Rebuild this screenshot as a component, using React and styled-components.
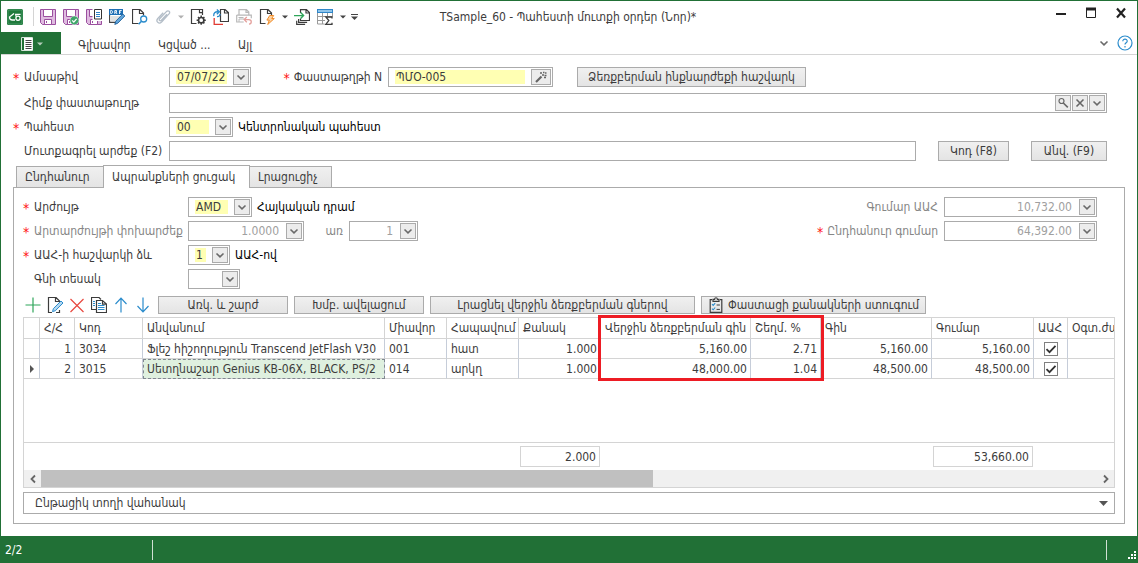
import styled, { createGlobalStyle, css } from 'styled-components'

const GlobalStyle = createGlobalStyle`
  * {
    box-sizing: border-box;
  }
  body {
    margin: 0;
    background: #ffffff;
  }
  body, button, input, table {
    font-family: "DejaVu Sans Condensed", "DejaVu Sans", sans-serif;
    font-size: 12px;
    color: #3c3c3c;
  }
  svg {
    display: block;
    flex: none;
  }
`

const Window = styled.div`
  display: flex;
  flex-direction: column;
  min-height: 100vh;
  border: 1px solid #217036;
  border-bottom: 0;
`

const TitleBar = styled.header`
  display: grid;
  grid-template-columns: 1fr auto 1fr;
  align-items: center;
  height: 31px;
  padding: 0 8px 0 6px;
`

const QuickTools = styled.div`
  display: flex;
  align-items: center;
  gap: 7px;
`

const Divider = styled.span`
  width: 1px;
  height: 19px;
  margin: 0 -1px 0 3px;
  background: #d4d4d4;
`

const IconButton = styled.button`
  display: flex;
  align-items: center;
  justify-content: center;
  flex: none;
  width: 16px;
  height: 18px;
  padding: 0;
  border: 0;
  background: transparent;
`

const CaretButton = styled(IconButton)`
  width: 7px;
  margin: 0 -1px;
`

const Title = styled.h1`
  margin: 0;
  font-size: 12px;
  font-weight: 400;
  white-space: nowrap;
`

const WindowButtons = styled.div`
  display: flex;
  justify-content: flex-end;
  gap: 14px;
  padding-bottom: 8px;
`

const Ribbon = styled.nav`
  display: flex;
  align-items: center;
  height: 23px;
  border-bottom: 1px solid #d4d4d4;
`

const FileButton = styled.button`
  display: flex;
  align-items: center;
  justify-content: center;
  gap: 2px;
  width: 60px;
  height: 22px;
  padding: 2px 0 0;
  border: 0;
  background: #217036;
`

const RibbonTab = styled.button`
  height: 22px;
  margin-left: 17px;
  padding: 4px 0 0;
  border: 0;
  background: transparent;
  min-width: ${props => props.$width}px;
  text-align: left;
  white-space: nowrap;
`

const RibbonEnd = styled.div`
  display: flex;
  align-items: center;
  gap: 5px;
  margin-left: auto;
  padding-right: 4px;
`

const Form = styled.main`
  display: flex;
  flex-direction: column;
  flex: 1;
  padding: 12px 12px;
`

const FormRows = styled.div`
  display: flex;
  flex-direction: column;
  gap: 4px;
  padding-right: 18px;
`

const Row = styled.div`
  display: flex;
  align-items: center;
  height: 20px;
  margin-bottom: ${props => (props.$spaced ? 2 : 0)}px;
`

const Label = styled.label`
  flex: none;
  width: ${props => props.$width}px;
  padding-left: 11px;
  white-space: nowrap;
  color: ${props => (props.$muted ? '#868686' : '#3c3c3c')};
  ${props => props.$right && css`
    padding: 0 6px 0 0;
    text-align: right;
  `}
`

const Star = styled.span`
  display: inline-block;
  margin-left: ${props => (props.$inline ? 0 : -11)}px;
  margin-right: ${props => (props.$inline ? 4 : 0)}px;
  width: ${props => (props.$inline ? 'auto' : '11px')};
  color: #ff1010;
  font-size: 14px;
  line-height: 12px;
  vertical-align: bottom;
`

const Box = styled.div`
  display: flex;
  align-items: center;
  flex: ${props => (props.$width ? 'none' : '1')};
  min-width: 0;
  width: ${props => (props.$width ? `${props.$width}px` : 'auto')};
  height: 20px;
  padding: 0 1px 0 6px;
  border: 1px solid #ababab;
  background: #ffffff;
`

const TextInput = styled.input`
  flex: 1;
  min-width: 0;
  width: 0;
  height: 14px;
  margin-right: 6px;
  padding: 0 1px;
  border: 0;
  outline: 0;
  background: ${props => (props.$required ? '#ffffb3' : 'transparent')};
  text-align: ${props => (props.$number ? 'right' : 'left')};
  &:disabled {
    color: #a0a0a0;
  }
`

const BoxButton = styled.button`
  display: flex;
  align-items: center;
  justify-content: center;
  flex: none;
  width: ${props => (props.$wide ? 20 : 16)}px;
  height: 16px;
  margin-left: ${props => (props.$next ? 1 : 0)}px;
  padding: 0;
  border: 1px solid #ababab;
  background: #ececec;
`

const Button = styled.button`
  display: flex;
  align-items: center;
  justify-content: center;
  flex: none;
  gap: 4px;
  width: ${props => props.$width}px;
  height: ${props => (props.$small ? 18 : 20)}px;
  margin-left: ${props => props.$gap || 0}px;
  padding: 0;
  border: 1px solid #ababab;
  background: linear-gradient(#f0f0f0, #e4e4e4);
  white-space: nowrap;
`

const Note = styled.span`
  padding-left: 5px;
  color: #000000;
  white-space: nowrap;
`

const Tabs = styled.div`
  display: flex;
  align-items: flex-end;
  margin-top: 4px;
  padding-left: 3px;
`

const Tab = styled.button`
  width: ${props => props.$width}px;
  height: 21px;
  padding: 0 8px;
  border: 1px solid #ababab;
  border-bottom: 0;
  background: linear-gradient(#f0f0f0, #e4e4e4);
  text-align: left;
  white-space: nowrap;
  ${props => props.$active && css`
    z-index: 1;
    height: 23px;
    margin: 0 -1px -1px;
    background: #ffffff;
  `}
`

const Panel = styled.section`
  display: flex;
  flex-direction: column;
  flex: 1;
  padding: 9px 9px;
  border: 1px solid #ababab;
`

const Split = styled.div`
  display: flex;
  justify-content: space-between;
  padding-right: 18px;
`

const Column = styled.div`
  display: flex;
  flex-direction: column;
  gap: 4px;
`

const Between = styled(Label)`
  padding: 0 6px 0 0;
  text-align: right;
`

const ListTools = styled.div`
  display: flex;
  align-items: center;
  gap: 6px;
  margin-top: 7px;
  padding-left: 2px;
`

const ToolIcons = styled.div`
  display: flex;
  gap: 6px;
  margin-right: 1px;
`

const GridFrame = styled.div`
  display: flex;
  flex-direction: column;
  flex: 1;
  margin-top: 3px;
  border: 1px solid #d4d4d4;
`

const GridScroll = styled.div`
  position: relative;
  flex: 1;
`

const Table = styled.table`
  table-layout: fixed;
  width: 100%;
  border-collapse: separate;
  border-spacing: 0;
`

const HeadCell = styled.th`
  height: 21px;
  padding: 0 0 0 4px;
  border-right: 1px solid #d4d4d4;
  border-bottom: 1px solid #d4d4d4;
  font-weight: 400;
  text-align: left;
  white-space: nowrap;
  overflow: hidden;
  &:last-child {
    border-right: 0;
  }
`

const Cell = styled.td`
  height: 20px;
  padding: 0 3px 0 4px;
  border-right: 1px solid #c6cdd9;
  border-bottom: 1px solid #d4d4d4;
  text-align: ${props => (props.$number ? 'right' : 'left')};
  white-space: nowrap;
  overflow: hidden;
  &:last-child {
    border-right: 0;
  }
  ${props => props.$selected && css`
    background: #dff0df;
    outline: 1px dashed #808890;
    outline-offset: -1px;
  `}
`

const FillerCell = styled.td`
  height: 64px;
  padding: 0;
  border-bottom: 1px solid #d4d4d4;
`

const TotalCell = styled.td`
  height: 27px;
  padding: 0 1px;
`

const Total = styled.div`
  height: 21px;
  padding-right: 3px;
  border: 1px solid #d4d4d4;
  line-height: 20px;
  text-align: right;
`

const CheckWrap = styled.label`
  display: grid;
  justify-content: center;
  align-items: center;
  & > * {
    grid-area: 1 / 1;
  }
  svg {
    justify-self: center;
    pointer-events: none;
  }
`

const Check = styled.input`
  appearance: none;
  width: 14px;
  height: 14px;
  margin: 0;
  border: 1px solid #808080;
  background: #ffffff;
`

const Highlight = styled.div`
  position: absolute;
  left: 574px;
  top: -3px;
  width: 226px;
  height: 66px;
  border: 3px solid #ed1c24;
  pointer-events: none;
`

const ScrollBar = styled.div`
  display: flex;
  height: 17px;
  background: #f0f0f0;
`

const ScrollArrow = styled(IconButton)`
  width: 17px;
  height: 17px;
`

const ScrollTrack = styled.div`
  flex: 1;
`

const ScrollThumb = styled.div`
  width: 58%;
  height: 17px;
  background: #c0c0c0;
`

const RowPanelButton = styled.button`
  display: flex;
  align-items: center;
  justify-content: space-between;
  height: 22px;
  margin-top: 4px;
  padding: 0 6px 0 11px;
  border: 1px solid #ababab;
  background: #ffffff;
`

const StatusBar = styled.footer`
  display: flex;
  align-items: center;
  height: 27px;
  background: #217036;
  color: #ffffff;
`

const StatusText = styled.span`
  width: 152px;
  height: 20px;
  padding-left: 4px;
  border-right: 1px solid #d0e0d4;
  line-height: 20px;
`

const StatusEnd = styled.span`
  display: flex;
  align-items: flex-end;
  justify-content: flex-end;
  width: 31px;
  height: 20px;
  margin-left: auto;
  border-left: 1px solid #d0e0d4;
`

const Icon = ({ size = 16, children }) => (
  <svg width={size} height={size} viewBox={`0 0 ${size} ${size}`} fill="none" aria-hidden="true">
    {children}
  </svg>
)

const Caret = ({ color = '#444444', bar }) => (
  <svg width="7" height="8" viewBox="0 0 7 8" aria-hidden="true">
    {bar && <path d="M0 1.5h7" stroke={color} />}
    <path d={bar ? 'M0 3.5h7L3.5 7z' : 'M1 2.500h6L4 5.500z'} fill={color} />
  </svg>
)

const Chevron = () => (
  <svg width="10" height="7" viewBox="0 0 10 7" fill="none" aria-hidden="true">
    <path d="M1.5 1.5L5 4.8l3.5-3.3" stroke="#6a6a6a" strokeWidth="1.6" />
  </svg>
)

const AppIcon = () => (
  <Icon>
    <rect width="16" height="16" rx="1.5" fill="#1f7a3c" />
    <rect x="1" y="1" width="14" height="14" rx="1" stroke="#5faa78" strokeWidth=".6" />
    <path d="M7 4.500L2.500 8c0 2 1.2 3 2.800 3H8" stroke="#ffffff" strokeWidth="1.3" />
    <circle cx="11" cy="9.2" r="2.1" stroke="#ffffff" strokeWidth="1.3" />
    <path d="M9.2 7.5l-.6-2.2h5" stroke="#ffffff" strokeWidth="1.2" />
  </Icon>
)

const Disk = () => (
  <>
    <path d="M.5.5h15v15h-13l-2-2z" fill="#dfbbe0" stroke="#9b4f9f" />
    <path d="M3.500.5h9v7h-9zM4.500 15.500v-5h7v5z" fill="#ffffff" stroke="#9b4f9f" />
    <path d="M6.5 12v2" stroke="#9b4f9f" />
  </>
)

const SaveIcon = () => <Icon><Disk /></Icon>

const SaveOkIcon = () => (
  <Icon>
    <Disk />
    <circle cx="11.4" cy="11.4" r="4.400" fill="#3fa66a" stroke="#ffffff" strokeWidth=".5" />
    <path d="M9.2 11.4l1.6 1.7 2.8-3.2" stroke="#ffffff" strokeWidth="1.3" />
  </Icon>
)

const SaveDocIcon = () => (
  <Icon>
    <Disk />
    <path d="M6.500 0H16v12H6.500z" fill="#ffffff" />
    <path d="M8.500.5h7v9.500h-7z" fill="#ffffff" stroke="#333333" />
    <path d="M10 3.500h4M10 5.500h4M10 7.500h4" stroke="#2f86c8" />
  </Icon>
)

const DraftIcon = () => (
  <Icon>
    <path d="M.6 5v8.400h8M12.500 5h1v2" stroke="#444444" strokeWidth="1.1" />
    <path d="M0 0h14v6H0z" fill="#1e6eb4" />
    <path d="M1.700 1.500h1l.9.8v1.400l-.9.8h-1zM5.800 5V1.500h1.700v1.700H5.800M7 3.200L8 5M10.500 5V1.500h2.200M10.500 3.100H12" stroke="#ffffff" strokeWidth=".9" />
    <path d="M2 8h9M2 10h7M2 12h5" stroke="#c4c4c4" />
    <path d="M5.800 15.400l1-3.200 7-7.200 2 2-7 7.200z" fill="#62a6dc" stroke="#1d5f98" strokeWidth=".9" />
  </Icon>
)

const PreviewIcon = () => (
  <Icon>
    <path d="M11.500 6.500V4L8 .5H.5v14h6M7.500.8v3.700h4" stroke="#3c3c3c" strokeWidth="1.2" />
    <circle cx="11.700" cy="10" r="3" fill="#ffffff" stroke="#2b8ccc" strokeWidth="1.3" />
    <path d="M9.500 12.300L6.600 15.300" stroke="#2b8ccc" strokeWidth="1.6" />
  </Icon>
)

const ClipIcon = () => (
  <Icon>
    <path d="M12 5.300l-5.600 6c-1.300 1.300-3-.1-1.800-1.500l6.800-7.200c2-1.800 4.300.3 2.600 2.300L6.600 13c-2.700 2.600-6.300-.5-3.800-3.500l5.400-5.800" stroke="#b4bec8" strokeWidth="1.3" />
  </Icon>
)

const PageSetupIcon = () => (
  <Icon>
    <path d="M12.500 6V.5H1.500v14h5M9.500.7v3h3" stroke="#3c3c3c" strokeWidth="1.2" />
    <circle cx="11.200" cy="11.200" r="2.700" fill="#ffffff" stroke="#3c3c3c" strokeWidth="1.7" />
    <path d="M11.200 6.600v2M11.200 13.800v2M6.600 11.200h2M13.800 11.200h2M8 8l1.300 1.300M13.100 13.100l1.300 1.300M14.400 8l-1.300 1.300M9.300 13.100L8 14.400" stroke="#3c3c3c" strokeWidth="1.5" />
  </Icon>
)

const TransferIcon = () => (
  <Icon>
    <path d="M7.500.5h4.500l3.500 3.200v8.800h-8zM11.500.8v3.200h3.700" stroke="#3c3c3c" strokeWidth="1.2" fill="#ffffff" />
    <path d="M10 15.300H1.200V9" stroke="#e03a32" strokeWidth="1.3" />
    <path d="M.8 7.200C.4 4.200 2 2.500 5.200 2.800M3.800.5l2.600 2.300-2.600 2.400M4 7.500c2 .2 3.100-.7 3-2.500" stroke="#2b8ccc" strokeWidth="1.3" />
  </Icon>
)

const UndoPrintIcon = () => (
  <Icon>
    <path d="M3 6V.7h7.500l2.300 2.200V6M10 .8v2.500h3M.7 6.200h14.600v3M.7 6v7h7" stroke="#b8b8b8" strokeWidth="1.2" />
    <path d="M2.500 8.500h5M3 13V10h5" stroke="#b8b8b8" />
    <path d="M8.600 10.600h4.200c3.300 0 3.200 4.300.2 4.500M10.800 8L8.200 10.600l2.600 2.600" stroke="#e4a09c" strokeWidth="1.3" />
  </Icon>
)

const ActionIcon = () => (
  <Icon>
    <path d="M12.500 6V4L9 .5H1.500v14h5M8.500.8v3.700h4" stroke="#3c3c3c" strokeWidth="1.2" />
    <path d="M10.700 6.500h4l-2 3h2.600l-6.600 6 1.600-4.400H7.900z" fill="#fbd1a2" stroke="#f08c28" />
  </Icon>
)

const ExportIcon = () => (
  <Icon>
    <path d="M6.500 4V.7h6l3 2.800v8H6.500V9.500M12 1v3h3.300M4.600 10v3.400h8.500M2.700 11.800v3.500h8.400" stroke="#3c3c3c" strokeWidth="1.2" />
    <path d="M0 6.600h9.600M6.600 3.600l3 3-3 3" stroke="#2fa65a" strokeWidth="1.4" />
  </Icon>
)

const SumTableIcon = () => (
  <Icon>
    <path d="M.5 4v11h7M.5 7.500h15V4M.5 11.500H8M5.500 4v11M10.500 4v4" stroke="#9a9a9a" />
    <path d="M0 0h16v4H0z" fill="#2f86c8" />
    <path d="M1 2h14" stroke="#8fc4ea" strokeWidth="2" />
    <path d="M15 9.500V8H8.800l3 3.600-3 3.700H15v-1.600" stroke="#3c3c3c" strokeWidth="1.3" fill="#ffffff" />
  </Icon>
)

const PencilDocIcon = () => (
  <Icon>
    <path d="M12.500 5V4L9 .5H1.500v15H5M8.500.8v3.700h4M9 15.500h3.500V13" stroke="#3c3c3c" strokeWidth="1.2" />
    <path d="M5.500 14.600l.9-3L14 4l2 2-7.600 7.700z" fill="#b5d8f1" stroke="#2b8ccc" />
  </Icon>
)

const CopyIcon = () => (
  <Icon>
    <path d="M5 12.500H.5V.5h7.500l2 2" stroke="#3c3c3c" strokeWidth="1.2" />
    <path d="M5.500 3.500h6l4 3.500v8.500h-10zM11.500 3.500v3.700h4" fill="#ffffff" stroke="#3c3c3c" strokeWidth="1.2" />
    <path d="M2 4.500h2M2 6.500h2M2 8.500h2M7 6.500h3M7 8.500h6.500M7 10.500h6.500M7 12.500h6.500" stroke="#2b8ccc" />
  </Icon>
)

const ClipboardIcon = () => (
  <Icon>
    <path d="M4 2.700H2.200v12.700h11.600V2.700H12M5 4.400V2.300h1.600C6.700.2 9.300.2 9.400 2.300H11v2.100z" stroke="#3c3c3c" strokeWidth="1.2" />
    <path d="M4 7.200l1.200 1.200 2-2.300M4 11.600l1.200 1.200 2-2.300" stroke="#2b8ccc" strokeWidth="1.1" />
    <path d="M8.600 8h3.300M8.600 12.400h3.300" stroke="#3c3c3c" />
  </Icon>
)

const Line = ({ d, color, width = 1.2 }) => (
  <Icon><path d={d} stroke={color} strokeWidth={width} /></Icon>
)

const WandIcon = () => (
  <Icon size={12}>
    <path d="M1 11l5.500-5.500" stroke="#666666" strokeWidth="2.2" />
    <path d="M5 2h2M8 1.500h1.500M10 2h1.500M7 4h2M9.500 4.500h2M9 6.500h2" stroke="#666666" strokeWidth="1.6" />
  </Icon>
)

const LookupIcon = () => (
  <Icon size={12}>
    <circle cx="4.500" cy="4" r="2.500" stroke="#666666" strokeWidth="1.2" />
    <path d="M6.300 6l4.500 4.300" stroke="#666666" strokeWidth="1.6" />
  </Icon>
)

const ClearIcon = () => (
  <Icon size={12}>
    <path d="M2.500 2.500l7 7M9.500 2.500l-7 7" stroke="#666666" strokeWidth="1.6" />
  </Icon>
)

const HelpIcon = () => (
  <Icon>
    <circle cx="8" cy="8" r="7" stroke="#2b8ccc" strokeWidth="1.2" />
    <path d="M5.800 6.300c0-3 4.500-2.800 4.400-.1 0 1.600-2.200 1.600-2.200 3.400M8 11v1.400" stroke="#2b8ccc" strokeWidth="1.2" />
  </Icon>
)

const Grip = () => (
  <Icon size={10}>
    <path d="M7 1h2v2H7zM4 4h2v2H4zM7 4h2v2H7zM1 7h2v2H1zM4 7h2v2H4zM7 7h2v2H7z" fill="#ffffff" />
  </Icon>
)

const Field = ({ id, value = '', width, required, number, disabled, drop = true }) => (
  <Box $width={width}>
    <TextInput
      id={id}
      defaultValue={value}
      $required={required}
      $number={number}
      disabled={disabled}
    />
    {drop && <BoxButton type="button" aria-label="Բացել"><Chevron /></BoxButton>}
  </Box>
)

const columns = [16, 35, 68, 242, 62, 72, 82, 150, 70, 111, 102, 34]
const headings = ['', 'Հ/Հ', 'Կոդ', 'Անվանում', 'Միավոր', 'Հապավում', 'Քանակ',
  'Վերջին ձեռքբերման գին', 'Շեղմ. %', 'Գին', 'Գումար', 'ԱԱՀ', 'Օգտ.ժա']

const items = [
  {
    code: '3034', name: 'Ֆլեշ հիշողություն Transcend JetFlash V30', unit: '001', short: 'հատ',
    count: '1.000', lastPrice: '5,160.00', diff: '2.71', price: '5,160.00', sum: '5,160.00',
  },
  {
    code: '3015', name: 'Սետղնաշար Genius KB-06X, BLACK, PS/2', unit: '014', short: 'արկղ',
    count: '1.000', lastPrice: '48,000.00', diff: '1.04', price: '48,500.00', sum: '48,500.00',
    current: true,
  },
]

const quickTools = [
  ['Պահպանել', SaveIcon], ['Պահպանել և փակել', SaveOkIcon], ['Պահպանել և տպել', SaveDocIcon],
  ['Սևագիր', DraftIcon], ['Դիտել', PreviewIcon], ['Կցել', ClipIcon, '#b0b0b0'],
  ['Կարգավորել', PageSetupIcon], ['Փոխանցել', TransferIcon], ['Չեղարկել', UndoPrintIcon],
  ['Գործողություններ', ActionIcon, '#444444'], ['Արտահանել', ExportIcon],
  ['Հանրագումար', SumTableIcon, '#444444'],
]

function ItemsGrid() {
  return (
    <GridFrame>
      <GridScroll>
        <Table>
          <colgroup>
            {columns.map((width, i) => <col key={i} width={width} />)}
            <col />
          </colgroup>
          <thead>
            <tr>{headings.map((text, i) => <HeadCell key={i}>{text}</HeadCell>)}</tr>
          </thead>
          <tbody>
            {items.map((item, i) => (
              <tr key={item.code}>
                <Cell>
                  {item.current && (
                    <svg width="8" height="8" viewBox="0 0 8 8" aria-hidden="true">
                      <path d="M2 0l4 4-4 4z" fill="#555555" />
                    </svg>
                  )}
                </Cell>
                <Cell $number>{i + 1}</Cell>
                <Cell>{item.code}</Cell>
                <Cell $selected={item.current}>{item.name}</Cell>
                <Cell>{item.unit}</Cell>
                <Cell>{item.short}</Cell>
                <Cell $number>{item.count}</Cell>
                <Cell $number>{item.lastPrice}</Cell>
                <Cell $number>{item.diff}</Cell>
                <Cell $number>{item.price}</Cell>
                <Cell $number>{item.sum}</Cell>
                <Cell>
                  <CheckWrap>
                    <Check type="checkbox" defaultChecked aria-label="ԱԱՀ" />
                    <svg width="12" height="12" viewBox="0 0 12 12" fill="none" aria-hidden="true">
                      <path d="M1.500 6.200l3 3 6-6.400" stroke="#333333" strokeWidth="1.8" />
                    </svg>
                  </CheckWrap>
                </Cell>
                <Cell />
              </tr>
            ))}
            <tr><FillerCell colSpan={13} /></tr>
          </tbody>
          <tfoot>
            <tr>
              <TotalCell colSpan={6} />
              <TotalCell><Total>2.000</Total></TotalCell>
              <TotalCell colSpan={3} />
              <TotalCell><Total>53,660.00</Total></TotalCell>
              <TotalCell colSpan={2} />
            </tr>
          </tfoot>
        </Table>
        <Highlight />
      </GridScroll>
      <ScrollBar>
        <ScrollArrow type="button" aria-label="Ձախ">
          <Icon size={10}><path d="M7 1.500L3.500 5 7 8.500" stroke="#666666" strokeWidth="1.8" /></Icon>
        </ScrollArrow>
        <ScrollTrack><ScrollThumb /></ScrollTrack>
        <ScrollArrow type="button" aria-label="Աջ">
          <Icon size={10}><path d="M3 1.500L6.500 5 3 8.500" stroke="#666666" strokeWidth="1.8" /></Icon>
        </ScrollArrow>
      </ScrollBar>
    </GridFrame>
  )
}

function App() {
  return (
    <Window>
      <GlobalStyle />
      <TitleBar>
        <QuickTools>
          <AppIcon />
          <Divider />
          {quickTools.map(([label, Glyph, caret]) => [
            <IconButton key={label} type="button" aria-label={label}><Glyph /></IconButton>,
            caret && (
              <CaretButton key={label + 'more'} type="button" aria-label={label + ' ...'}>
                <Caret color={caret} />
              </CaretButton>
            ),
          ])}
          <CaretButton type="button" aria-label="Կարգավորել վահանակը"><Caret bar /></CaretButton>
        </QuickTools>
        <Title>TSample_60 - Պահեստի մուտքի օրդեր (Նոր)*</Title>
        <WindowButtons>
          <IconButton type="button" aria-label="Ծալել">
            <Line d="M3 9h10" color="#222222" width={2} />
          </IconButton>
          <IconButton type="button" aria-label="Մեծացնել">
            <Icon>
              <path d="M3.500 3.500h9v9h-9z" stroke="#222222" />
              <path d="M3 4h10" stroke="#222222" strokeWidth="3" />
            </Icon>
          </IconButton>
          <IconButton type="button" aria-label="Փակել">
            <Line d="M4 3.500l8 9M12 3.500l-8 9" color="#222222" width={2.2} />
          </IconButton>
        </WindowButtons>
      </TitleBar>
      <Ribbon>
        <FileButton type="button" aria-label="Ֆայլ">
          <Icon size={14}>
            <path d="M1.500.5h11v13h-11z" stroke="#d6e4da" />
            <path d="M4 1h8.500v12H4z" fill="#ffffff" />
            <path d="M5.500 3.500h6M5.500 5.500h6M5.500 7.500h6M5.500 9.500h6M5.500 11.500h6" stroke="#444444" />
          </Icon>
          <Caret color="#b4ccba" />
        </FileButton>
        <RibbonTab type="button" $width={63}>Գլխավոր</RibbonTab>
        <RibbonTab type="button" $width={63}>Կցված ...</RibbonTab>
        <RibbonTab type="button" $width={20}>Այլ</RibbonTab>
        <RibbonEnd>
          <IconButton type="button" aria-label="Ծալել ժապավենը"><Chevron /></IconButton>
          <IconButton type="button" aria-label="Օգնություն"><HelpIcon /></IconButton>
        </RibbonEnd>
      </Ribbon>
      <Form>
        <FormRows>
          <Row $spaced>
            <Label htmlFor="date" $width={156}><Star>*</Star>Ամսաթիվ</Label>
            <Field id="date" value="07/07/22" width={82} required />
            <Label htmlFor="number" $right $width={137}><Star $inline>*</Star>Փաստաթղթի N</Label>
            <Box $width={165}>
              <TextInput id="number" defaultValue="ՊՄՕ-005" $required />
              <BoxButton type="button" $wide aria-label="Գեներացնել"><WandIcon /></BoxButton>
            </Box>
            <Button type="button" $width={229} $gap={24}>Ձեռքբերման ինքնարժեքի հաշվարկ</Button>
          </Row>
          <Row>
            <Label htmlFor="base" $width={156}>Հիմք փաստաթուղթ</Label>
            <Box>
              <TextInput id="base" />
              <BoxButton type="button" aria-label="Գտնել"><LookupIcon /></BoxButton>
              <BoxButton type="button" $next aria-label="Մաքրել"><ClearIcon /></BoxButton>
              <BoxButton type="button" $next aria-label="Բացել"><Chevron /></BoxButton>
            </Box>
          </Row>
          <Row>
            <Label htmlFor="store" $width={156}><Star>*</Star>Պահեստ</Label>
            <Field id="store" value="00" width={64} required />
            <Note>Կենտրոնական պահեստ</Note>
          </Row>
          <Row>
            <Label htmlFor="search" $width={156}>Մուտքագրել արժեք (F2)</Label>
            <Field id="search" drop={false} />
            <Button type="button" $width={71} $gap={22}>Կոդ (F8)</Button>
            <Button type="button" $width={76} $gap={22}>Անվ. (F9)</Button>
          </Row>
        </FormRows>
        <Tabs role="tablist">
          <Tab type="button" role="tab" $width={88}>Ընդհանուր</Tab>
          <Tab type="button" role="tab" aria-selected="true" $active $width={147}>Ապրանքների ցուցակ</Tab>
          <Tab type="button" role="tab" $width={83}>Լրացուցիչ</Tab>
        </Tabs>
        <Panel>
          <Split>
            <Column>
              <Row>
                <Label htmlFor="currency" $width={165}><Star>*</Star>Արժույթ</Label>
                <Field id="currency" value="AMD" width={64} required />
                <Note>Հայկական դրամ</Note>
              </Row>
              <Row>
                <Label htmlFor="rate" $muted $width={165}><Star>*</Star>Արտարժույթի փոխարժեք</Label>
                <Field id="rate" value="1.0000" width={116} number disabled />
                <Between htmlFor="per" $muted $width={45}>առ</Between>
                <Field id="per" value="1" width={69} number disabled />
              </Row>
              <Row>
                <Label htmlFor="vatType" $width={165}><Star>*</Star>ԱԱՀ-ի հաշվարկի ձև</Label>
                <Field id="vatType" value="1" width={42} required />
                <Note>ԱԱՀ-ով</Note>
              </Row>
              <Row>
                <Label htmlFor="priceType" $width={165}>Գնի տեսակ</Label>
                <Field id="priceType" width={52} />
              </Row>
            </Column>
            <Column>
              <Row>
                <Label htmlFor="vatSum" $muted $right $width={140}>Գումար ԱԱՀ</Label>
                <Field id="vatSum" value="10,732.00" width={153} number disabled />
              </Row>
              <Row>
                <Label htmlFor="total" $muted $right $width={140}><Star $inline>*</Star>Ընդհանուր գումար</Label>
                <Field id="total" value="64,392.00" width={153} number disabled />
              </Row>
            </Column>
          </Split>
          <ListTools>
            <ToolIcons>
              <IconButton type="button" aria-label="Ավելացնել">
                <Line d="M8 .5v15M.5 8h15" color="#2fa65a" />
              </IconButton>
              <IconButton type="button" aria-label="Խմբագրել"><PencilDocIcon /></IconButton>
              <IconButton type="button" aria-label="Ջնջել">
                <Line d="M1.500 2l13 13M14.500 2l-13 13" color="#e8483f" />
              </IconButton>
              <IconButton type="button" aria-label="Պատճենել"><CopyIcon /></IconButton>
              <IconButton type="button" aria-label="Վերև">
                <Line d="M8 15.500V1.500M2.500 7L8 1.200 13.500 7" color="#2b8ccc" />
              </IconButton>
              <IconButton type="button" aria-label="Ներքև">
                <Line d="M8 .5v14M2.500 9L8 14.800 13.500 9" color="#2b8ccc" />
              </IconButton>
            </ToolIcons>
            <Button type="button" $small $width={130}>Առկ. և շարժ</Button>
            <Button type="button" $small $width={130}>Խմբ. ավելացում</Button>
            <Button type="button" $small $width={265}>Լրացնել վերջին ձեռքբերման գներով</Button>
            <Button type="button" $small $width={225}>
              <ClipboardIcon />
              Փաստացի քանակների ստուգում
            </Button>
          </ListTools>
          <ItemsGrid />
          <RowPanelButton type="button">
            Ընթացիկ տողի վահանակ
            <svg width="9" height="5" viewBox="0 0 9 5" aria-hidden="true">
              <path d="M0 0h9L4.500 5z" fill="#555555" />
            </svg>
          </RowPanelButton>
        </Panel>
      </Form>
      <StatusBar>
        <StatusText>2/2</StatusText>
        <StatusEnd><Grip /></StatusEnd>
      </StatusBar>
    </Window>
  )
}

export default App
